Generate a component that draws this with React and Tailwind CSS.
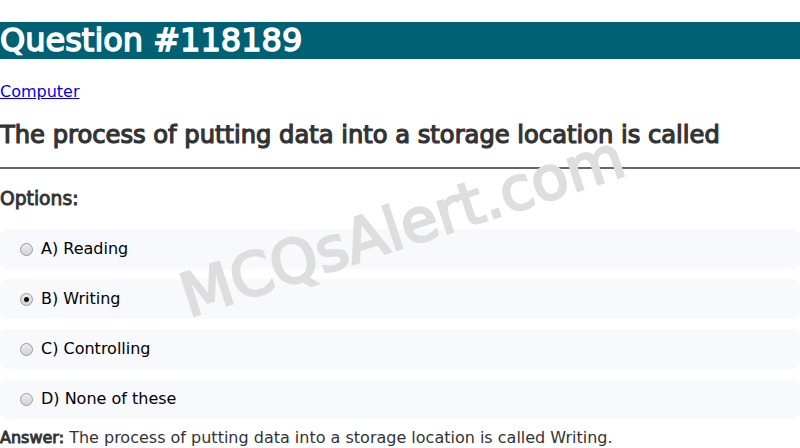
import { useState } from "react";

const options = [
  { id: "a", label: "A) Reading" },
  { id: "b", label: "B) Writing" },
  { id: "c", label: "C) Controlling" },
  { id: "d", label: "D) None of these" },
];

const App = () => {
  const [picked, setPicked] = useState("b");

  return (
    <div
      className="relative w-[800px] h-[448px] overflow-hidden bg-white text-[#333]"
      style={{ fontFamily: '"DejaVu Sans", Verdana, sans-serif' }}
    >
      <div className="pt-[22px]">
        <h1 className="h-[37px] bg-[#006074] text-white text-[32px] font-normal leading-[37px] whitespace-nowrap [-webkit-text-stroke:1.5px_white]">
          Question #118189
        </h1>
      </div>

      <div className="mt-[21px]">
        <a href="#" className="text-[16px] text-[#0000ee] underline leading-[22px]">
          Computer
        </a>
      </div>

      <h2 className="mt-[16px] text-[24.2px] font-normal leading-[30px] text-[#333] whitespace-nowrap [-webkit-text-stroke:1.2px_#333]">
        The process of putting data into a storage location is called
      </h2>

      <hr className="mt-[17px] border-0 border-t-2 border-[#666]" />

      <div className="mt-[19px] text-[18.72px] font-normal leading-[22px] [-webkit-text-stroke:0.9px_#333]">
        Options:
      </div>

      <div className="mt-[19px] flex flex-col gap-[10px]">
        {options.map((opt) => {
          const on = picked === opt.id;
          return (
            <label
              key={opt.id}
              className="flex items-center h-[40px] rounded-lg bg-[#f8f9fc] pl-[20px] text-[16px] text-black cursor-pointer"
              onClick={() => setPicked(opt.id)}
            >
              <span className="flex items-center justify-center w-[13px] h-[13px] rounded-full border border-[#9a9a9a] bg-gradient-to-b from-[#ececec] to-[#d4d4d4] mr-[8px]">
                {on && <span className="w-[5px] h-[5px] rounded-full bg-[#111]" />}
              </span>
              {opt.label}
            </label>
          );
        })}
      </div>

      <p className="mt-[9px] text-[16px] leading-[20px] text-[#333]">
        <span className="[-webkit-text-stroke:0.9px_#333]">Answer:</span> The process of putting data into a
        storage location is called Writing.
      </p>

      <div className="pointer-events-none absolute left-[402px] top-[226px] -translate-x-1/2 -translate-y-1/2 -rotate-[18deg] text-[60px] font-normal whitespace-nowrap text-[#dedede] [-webkit-text-stroke:2.5px_#dedede]">
        MCQsAlert.com
      </div>
    </div>
  );
};

export default App;
